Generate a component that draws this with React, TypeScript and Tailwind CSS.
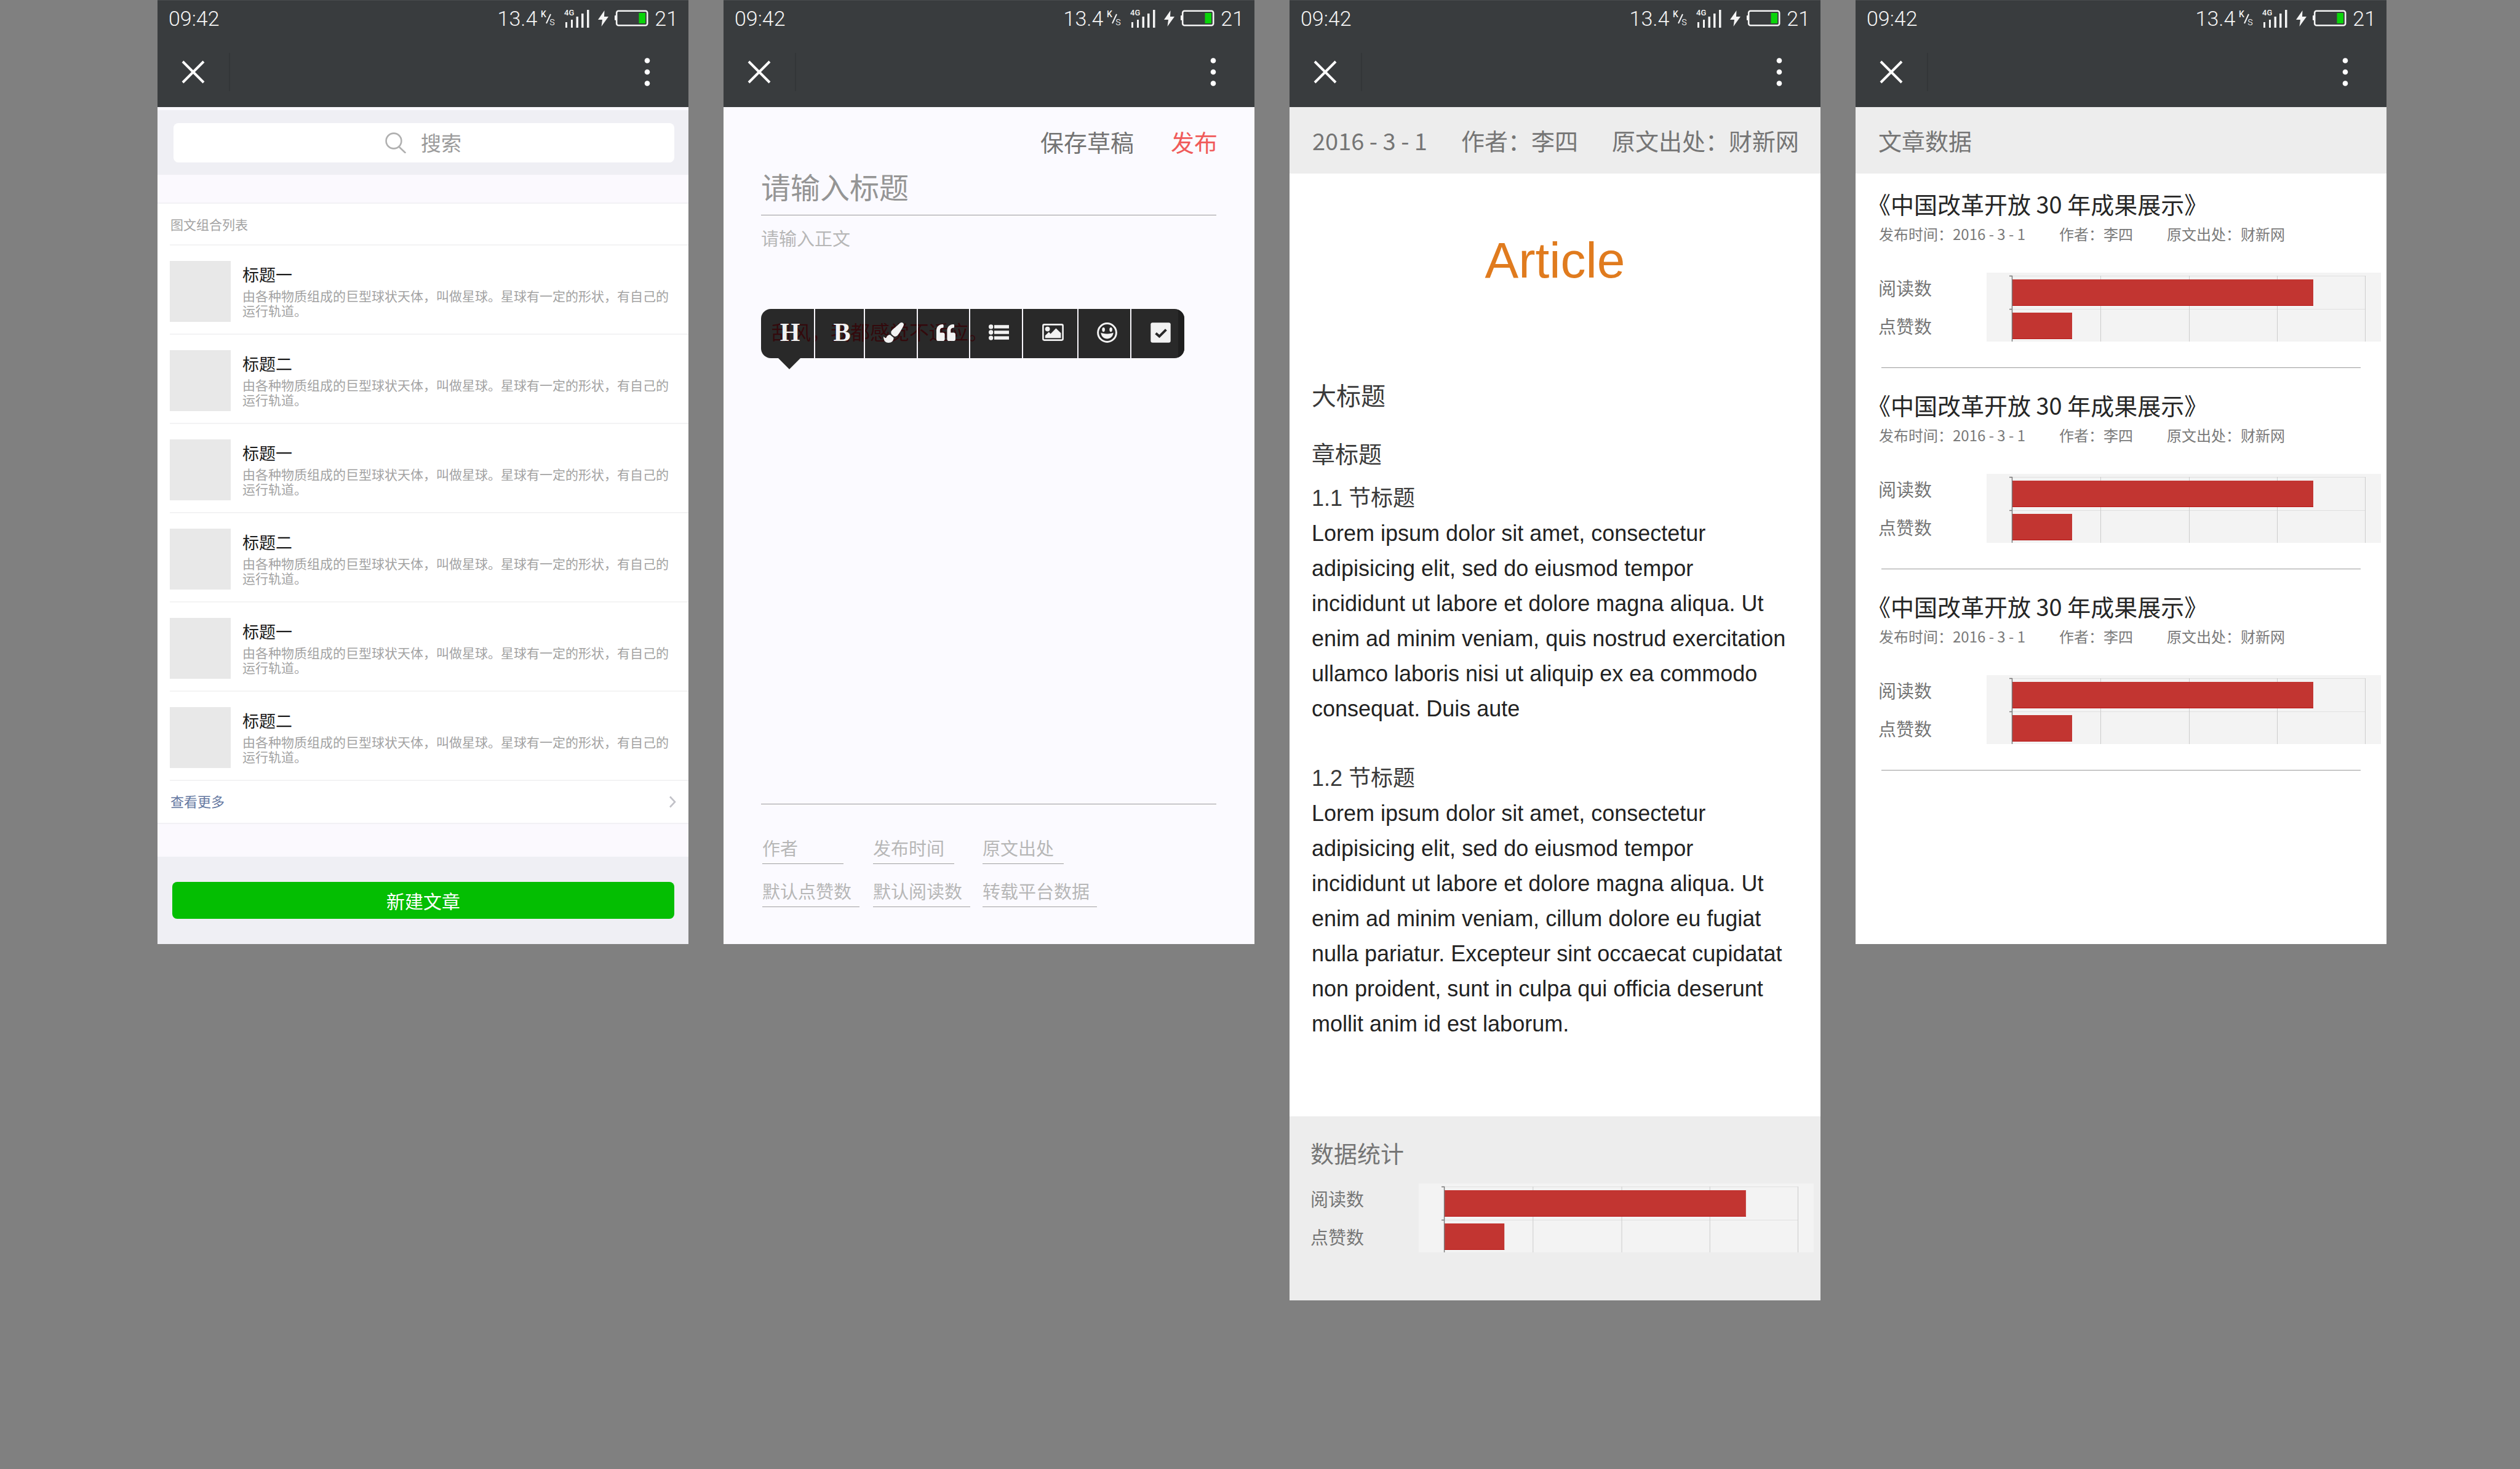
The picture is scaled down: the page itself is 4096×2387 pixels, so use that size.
import React from "react";
import { FaPaintBrush, FaQuoteLeft } from "react-icons/fa";

/* ---------- status bar and navigation ---------- */

function NetSpeedUnit() {
  return (
    <svg className="h-[32px] w-[25px] overflow-visible" viewBox="0 -2 25 32" fill="#f4f4f4">
      <text x="0" y="12" fontFamily="Roboto, sans-serif" fontSize="14" fontWeight="500">K</text>
      <path d="M9 22 L16 7" stroke="#f4f4f4" strokeWidth="2" />
      <text x="14" y="25" fontFamily="Roboto, sans-serif" fontSize="18">s</text>
    </svg>
  );
}

function SignalIcon() {
  return (
    <svg className="h-[34px] w-[41px] overflow-visible" viewBox="0 -2 41 34" fill="#f4f4f4">
      <text x="0" y="10" fontFamily="Roboto, sans-serif" fontSize="13" fontWeight="500">4G</text>
      <rect x="2" y="21" width="3" height="9" />
      <rect x="11" y="17" width="3" height="13" />
      <rect x="19.5" y="12" width="3.5" height="18" />
      <rect x="28" y="7" width="3.5" height="23" />
      <rect x="37" y="1" width="3.5" height="29" />
    </svg>
  );
}

function BoltIcon() {
  return (
    <svg className="h-[26px] w-[17px]" viewBox="0 0 17 26" fill="#f4f4f4">
      <path d="M10.5 0 L0 15 H7 L5.5 26 L17 10 H10 Z" />
    </svg>
  );
}

function BatteryIcon() {
  return (
    <svg className="h-[27px] w-[55px]" viewBox="0 0 55 27">
      <rect x="0" y="9" width="3" height="8" rx="1" fill="#f4f4f4" />
      <rect x="3.2" y="1.7" width="50" height="23.6" rx="3" fill="none" stroke="#f4f4f4" strokeWidth="2.6" />
      <rect x="39.5" y="5" width="10.5" height="17" fill="#0ad40a" />
    </svg>
  );
}

function PhoneHeader() {
  return (
    <header className="border-t border-[#484b4d] bg-[#393c3e] text-[#f4f4f4]">
      <div className="flex h-[59px] items-center justify-between pr-[17px] pb-0.5 pl-[18px] font-[Roboto,sans-serif] text-[34px] leading-[40px] font-light">
        <span>09:42</span>
        <div className="flex items-center">
          <span>13.4</span>
          <span className="ml-1.5"><NetSpeedUnit /></span>
          <span className="ml-[13px]"><SignalIcon /></span>
          <span className="ml-[14px]"><BoltIcon /></span>
          <span className="ml-2.5"><BatteryIcon /></span>
          <span className="ml-2.5">21</span>
        </div>
      </div>
      <div className="flex h-[114px] items-center">
        <button type="button" aria-label="关闭" className="ml-[39px]">
          <svg className="h-[38px] w-[38px]" viewBox="0 0 38 38" stroke="#fff" strokeWidth="4">
            <path d="M2 2 L36 36 M36 2 L2 36" />
          </svg>
        </button>
        <span className="ml-[39px] h-[62px] w-[2px] bg-[#333638]" />
        <button type="button" aria-label="更多" className="mr-[62px] ml-auto">
          <svg className="h-[46px] w-[10px]" viewBox="0 0 10 46" fill="#fff">
            <circle cx="5" cy="4.5" r="4.3" />
            <circle cx="5" cy="23" r="4.3" />
            <circle cx="5" cy="41.5" r="4.3" />
          </svg>
        </button>
      </div>
    </header>
  );
}

function Phone({ className, children }: { className: string; children: React.ReactNode }) {
  return (
    <section className={className}>
      <PhoneHeader />
      {children}
    </section>
  );
}

/* ---------- article list ---------- */

const rows = ["标题一", "标题二", "标题一", "标题二", "标题一", "标题二"];

function ListScreen() {
  return (
    <Phone className="min-h-[1534px] bg-[#fbf9fe]">
      <div className="mt-[5px] bg-[#efeff4] pt-[21px] pr-[23px] pb-5 pl-[26px]">
        <label className="flex h-[64px] items-center justify-center rounded-[8px] bg-white">
          <svg className="h-[34px] w-[34px]" viewBox="0 0 34 34" fill="none" stroke="#b0b0b0" strokeWidth="2.6">
            <circle cx="14" cy="14" r="12.4" />
            <path d="M22.5 23.5 L32.5 33" strokeLinecap="round" />
          </svg>
          <input
            type="text"
            aria-label="搜索"
            placeholder="搜索"
            className="ml-[24px] h-[48px] w-[68px] text-[33px] outline-none placeholder:text-[#9b9b9b]"
          />
        </label>
      </div>

      <div className="mt-[45px] border-y-2 border-[#f2f1f5] bg-white">
        <h2 className="flex h-[66px] items-center pt-px pl-[21px] text-[21px] text-[#a3a3a3]">图文组合列表</h2>
        <ul>
          {rows.map((title, i) => (
            <li key={i} className="ml-5 flex h-[145px] gap-[19px] border-t-2 border-[#f3f3f4] pt-[25px] pr-5">
              <div className="h-[99px] w-[99px] shrink-0 bg-[#e8e8e8]" />
              <div className="pt-1">
                <h3 className="text-[27px] leading-[36px] text-[#1a1a1a]">{title}</h3>
                <p className="mt-1 text-[21px] leading-[24px] text-[#a3a3a3]">
                  由各种物质组成的巨型球状天体，叫做星球。星球有一定的形状，有自己的运行轨道。
                </p>
              </div>
            </li>
          ))}
        </ul>
        <a href="#more" className="ml-5 flex h-[70px] items-center justify-between border-t-2 border-[#f3f3f4] pr-5 pb-1 pl-px text-[22px] text-[#63779f]">
          查看更多
          <svg className="mt-1 h-[20px] w-[12px]" viewBox="0 0 12 20" fill="none" stroke="#c2c2c8" strokeWidth="2.6">
            <path d="M2 1.5 L10 10 L2 18.5" />
          </svg>
        </a>
      </div>

      <div className="mt-[53px] bg-[#efeff4] pt-[41px] pr-[23px] pb-[41px] pl-6">
        <button type="button" className="h-[60px] w-full rounded-[8px] bg-[#04be02] text-[30px] leading-[44px] text-white">
          新建文章
        </button>
      </div>
    </Phone>
  );
}

/* ---------- editor ---------- */

function ListIcon() {
  return (
    <svg className="h-[26px] w-[33px]" viewBox="0 0 33 26" fill="#f2f2f2">
      <circle cx="3.7" cy="3.9" r="3.7" />
      <circle cx="3.7" cy="13" r="3.7" />
      <circle cx="3.7" cy="22.1" r="3.7" />
      <rect x="9" y="1.2" width="24" height="5.4" />
      <rect x="9" y="10.3" width="24" height="5.4" />
      <rect x="9" y="19.4" width="24" height="5.4" />
    </svg>
  );
}

function ImageIcon() {
  return (
    <svg className="h-[28px] w-[35px]" viewBox="0 0 35 28">
      <rect x="1.4" y="1.4" width="32.2" height="25.2" rx="2" fill="none" stroke="#f2f2f2" strokeWidth="2.6" />
      <circle cx="8.6" cy="8.6" r="3.9" fill="#f2f2f2" />
      <path d="M4.8 23.3 V19.3 L10.8 13.6 L13.6 16.4 L22.4 7.6 L30.4 15.3 V23.3 Z" fill="#f2f2f2" />
    </svg>
  );
}

function SmileIcon() {
  return (
    <svg className="h-[33px] w-[33px]" viewBox="0 0 33 33">
      <circle cx="16.5" cy="16.5" r="14.9" fill="none" stroke="#f2f2f2" strokeWidth="3" />
      <ellipse cx="10.6" cy="11.6" rx="2.3" ry="3.6" fill="#f2f2f2" />
      <ellipse cx="22.6" cy="11.6" rx="2.3" ry="3.6" fill="#f2f2f2" />
      <path d="M6.4 16.6 C9.5 19 23.5 19 26.6 16.6 C26.2 22.8 21.8 26.6 16.5 26.6 C11.2 26.6 6.8 22.8 6.4 16.6 Z" fill="#f2f2f2" />
    </svg>
  );
}

function CheckIcon() {
  return (
    <svg className="h-[33px] w-[33px]" viewBox="0 0 33 33">
      <rect x="0.3" y="0.3" width="32.4" height="32.4" rx="3" fill="#f2f2f2" />
      <path d="M8.6 17.4 L14.4 22.6 L25.4 11.6" fill="none" stroke="#292929" strokeWidth="4" />
    </svg>
  );
}

const tools = [
  { label: "标题", width: "w-[88px]", icon: <span>H</span> },
  { label: "加粗", width: "w-[81px]", icon: <span>B</span> },
  { label: "画笔", width: "w-[86px]", icon: <FaPaintBrush className="h-[33px] w-[33px]" /> },
  { label: "引用", width: "w-[85px]", icon: <FaQuoteLeft className="h-[31px] w-[31px]" /> },
  { label: "列表", width: "w-[86px]", icon: <ListIcon /> },
  { label: "图片", width: "w-[90px]", icon: <ImageIcon /> },
  { label: "表情", width: "w-[86px]", icon: <SmileIcon /> },
  { label: "待办", width: "w-[86px]", icon: <CheckIcon /> },
];

function Toolbar() {
  return (
    <div className="absolute top-[152px] left-0">
      <div className="relative flex h-[80px] overflow-hidden rounded-[16px] bg-[#292929]">
        <span aria-hidden="true" className="absolute top-[14px] left-[17px] text-[32px] leading-[44px] whitespace-nowrap text-[#33090c]">
          刮风，我都感觉不适应。
        </span>
        <div role="toolbar" className="relative flex divide-x-2 divide-[#f7f5fa]">
          {tools.map((t) => (
            <button
              key={t.label}
              type="button"
              aria-label={t.label}
              className={`${t.width} flex items-center justify-center pb-1 pl-2 font-['Liberation_Serif',serif] text-[42px] leading-[48px] font-bold text-[#f2f2f2]`}
            >
              {t.icon}
            </button>
          ))}
        </div>
        <span className="absolute top-0 right-0 h-full w-[10px] bg-[#1f1f1f]" />
      </div>
      <svg className="ml-7 h-[18px] w-[36px]" viewBox="0 0 36 18" fill="#292929">
        <path d="M0 0 H36 L18 18 Z" />
      </svg>
    </div>
  );
}

const fields = [
  { label: "作者", width: "w-[132px]" },
  { label: "发布时间", width: "w-[132px]" },
  { label: "原文出处", width: "w-[132px]" },
  { label: "默认点赞数", width: "w-[158px]" },
  { label: "默认阅读数", width: "w-[158px]" },
  { label: "转载平台数据", width: "w-[186px]" },
];

function EditorScreen() {
  return (
    <Phone className="min-h-[1534px] bg-[#fbfaff]">
      <div className="flex justify-end gap-[60px] pt-7 pr-[60px] text-[38px] leading-[56px]">
        <button type="button" className="text-[#737373]">保存草稿</button>
        <button type="button" className="text-[#f05a5a]">发布</button>
      </div>
      <form className="pr-[62px] pl-[61px]">
        <input
          aria-label="请输入标题"
          placeholder="请输入标题"
          className="block h-[92px] w-full border-b border-[#999999] pb-1 text-[48px] outline-none placeholder:text-[#959595]"
        />
        <div className="relative">
          <textarea
            aria-label="请输入正文"
            placeholder="请输入正文"
            className="block h-[957px] w-full resize-none border-b border-[#999999] pt-[18px] text-[29px] leading-[36px] outline-none placeholder:text-[#b7b7b7]"
          />
          <Toolbar />
        </div>
        <div className="mt-[43px] grid grid-cols-[180px_178px_auto] gap-y-4 pl-0.5">
          {fields.map((f) => (
            <input
              key={f.label}
              aria-label={f.label}
              placeholder={f.label}
              className={`${f.width} h-[54px] border-b border-[#a0a0a0] text-[29px] outline-none placeholder:text-[#b7b7b7]`}
            />
          ))}
        </div>
      </form>
    </Phone>
  );
}

/* ---------- statistics chart ---------- */

function Stats() {
  return (
    <div className="flex text-[29px] leading-[49px] text-[#757575]">
      <div className="flex w-[176px] flex-col gap-[13px]">
        <span>阅读数</span>
        <span>点赞数</span>
      </div>
      <svg className="h-[112px] min-w-0 flex-1" viewBox="0 0 641 112" preserveAspectRatio="none">
        <rect width="641" height="112" fill="#f3f3f3" />
        <path d="M42 5.5 H615 M42 59.5 H615" stroke="#e0e0e0" strokeWidth="1" />
        <path d="M185.5 5 V112 M329.5 5 V112 M472.5 5 V112 M615.5 5 V112" stroke="#cccccc" strokeWidth="1" />
        <rect x="42" y="11" width="489" height="43" fill="#c23531" />
        <rect x="42" y="65" width="97" height="43" fill="#c23531" />
        <path d="M42 53.5 H531 M42 107.5 H139" stroke="#b81414" strokeWidth="1" />
        <path d="M41.5 5 V112 M37 5.5 H42 M37 59.5 H42" stroke="#777777" strokeWidth="1.4" />
      </svg>
    </div>
  );
}

/* ---------- article ---------- */

function ArticleScreen() {
  return (
    <Phone className="bg-white">
      <div className="flex h-[108px] items-center gap-[55px] bg-[#ededed] pl-[37px] text-[38px] leading-[56px] whitespace-nowrap text-[#757575]">
        <span>2016 - 3 - 1</span>
        <span>作者：李四</span>
        <span>原文出处：财新网</span>
      </div>
      <article className="pt-[100px] pr-[52px] pb-[122px] pl-9 font-['Liberation_Sans','Noto_Sans_CJK_SC',sans-serif] text-[36px] leading-[57px] text-[#222222]">
        <h1 className="pl-4 text-center text-[82px] leading-[82px] text-[#e07b1e]">Article</h1>
        <h2 className="mt-[147px] font-['Noto_Sans_CJK_SC',sans-serif] text-[40px] leading-[60px] text-[#3a3a3a]">大标题</h2>
        <h3 className="mt-[35px] font-['Noto_Sans_CJK_SC',sans-serif] text-[38px] leading-[60px] text-[#3a3a3a]">章标题</h3>
        <h4 className="mt-[15px] text-[#3a3a3a]">1.1 节标题</h4>
        <p>
          Lorem ipsum dolor sit amet, consectetur adipisicing elit, sed do eiusmod tempor incididunt ut labore et
          dolore magna aliqua. Ut enim ad minim veniam, quis nostrud exercitation ullamco laboris nisi ut aliquip ex
          ea commodo consequat. Duis aute
        </p>
        <h4 className="mt-14 text-[#3a3a3a]">1.2 节标题</h4>
        <p>
          Lorem ipsum dolor sit amet, consectetur adipisicing elit, sed do eiusmod tempor incididunt ut labore et
          dolore magna aliqua. Ut enim ad minim veniam, cillum dolore eu fugiat nulla pariatur. Excepteur sint
          occaecat cupidatat non proident, sunt in culpa qui officia deserunt mollit anim id est laborum.
        </p>
      </article>
      <div className="bg-[#ededed] pt-[29px] pr-[11px] pb-[78px] pl-[34px]">
        <h2 className="mb-5 text-[38px] leading-[60px] text-[#757575]">数据统计</h2>
        <Stats />
      </div>
    </Phone>
  );
}

/* ---------- article statistics ---------- */

function DataScreen() {
  return (
    <Phone className="min-h-[1534px] bg-white">
      <h2 className="flex h-[108px] items-center bg-[#ededed] pl-[37px] text-[38px] leading-[56px] text-[#757575]">文章数据</h2>
      <ul className="flex flex-col gap-8 pt-[21px]">
        {[0, 1, 2].map((i) => (
          <li key={i}>
            <h3 className="pl-[19px] text-[38px] leading-[56px] text-[#262626]">《中国改革开放 30 年成果展示》</h3>
            <div className="flex gap-[55px] pl-[38px] text-[24px] leading-[42px] text-[#7a7a7a]">
              <span>发布时间：2016 - 3 - 1</span>
              <span>作者：李四</span>
              <span>原文出处：财新网</span>
            </div>
            <div className="mt-[42px] pr-[9px] pl-[37px]">
              <Stats />
            </div>
            <hr className="mt-[42px] mr-[42px] ml-[42px] border-t border-[#999999]" />
          </li>
        ))}
      </ul>
    </Phone>
  );
}

export default function App() {
  return (
    <main className="grid min-h-screen grid-cols-4 items-start gap-[57px] bg-[#808080] pr-[217px] pl-[256px] font-['Noto_Sans_CJK_SC',sans-serif]">
      <ListScreen />
      <EditorScreen />
      <ArticleScreen />
      <DataScreen />
    </main>
  );
}
